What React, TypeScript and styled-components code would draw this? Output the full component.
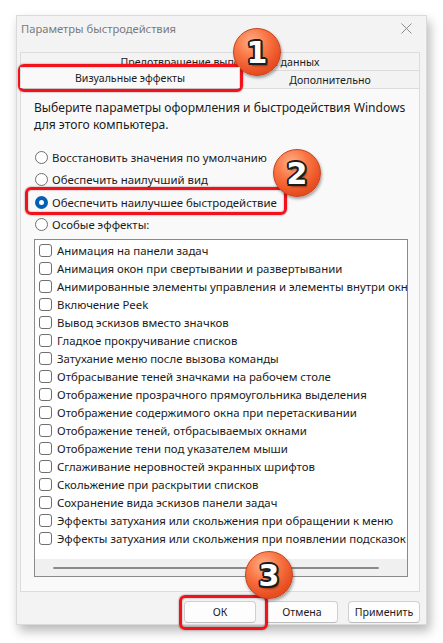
import React from "react";
import styled, { createGlobalStyle } from "styled-components";

const GlobalStyle = createGlobalStyle`
  html, body {
    margin: 0;
    padding: 0;
    background: #ffffff;
  }
  body {
    font-family: "Noto Sans", "Open Sans", sans-serif;
    color: #1b1b1b;
  }
`;

const effects = [
  "Анимация на панели задач",
  "Анимация окон при свертывании и развертывании",
  "Анимированные элементы управления и элементы внутри окна",
  "Включение Peek",
  "Вывод эскизов вместо значков",
  "Гладкое прокручивание списков",
  "Затухание меню после вызова команды",
  "Отбрасывание теней значками на рабочем столе",
  "Отображение прозрачного прямоугольника выделения",
  "Отображение содержимого окна при перетаскивании",
  "Отображение теней, отбрасываемых окнами",
  "Отображение тени под указателем мыши",
  "Сглаживание неровностей экранных шрифтов",
  "Скольжение при раскрытии списков",
  "Сохранение вида эскизов панели задач",
  "Эффекты затухания или скольжения при обращении к меню",
  "Эффекты затухания или скольжения при появлении подсказок",
];

const modes = [
  { label: "Восстановить значения по умолчанию", checked: false },
  { label: "Обеспечить наилучший вид", checked: false },
  { label: "Обеспечить наилучшее быстродействие", checked: true },
  { label: "Особые эффекты:", checked: false },
];

const CloseIcon = () => (
  <svg width="11" height="11" viewBox="0 0 11 11">
    <path d="M0.5 0.5 L10.5 10.5 M10.5 0.5 L0.5 10.5" stroke="#8a8a8a" strokeWidth="1" fill="none" />
  </svg>
);

export default function App() {
  return (
    <Page>
      <GlobalStyle />
      <Window>
        <TitleBar>
          <Title>Параметры быстродействия</Title>
          <CloseButton>
            <CloseIcon />
          </CloseButton>
        </TitleBar>

        <Body>
          <Tabs>
            <TabRow>
              <Tab $width="100%">Предотвращение выполнения данных</Tab>
            </TabRow>
            <TabRow>
              <Tab $width="220px" $active>
                Визуальные эффекты
              </Tab>
              <Tab $width="180px">Дополнительно</Tab>
            </TabRow>
          </Tabs>

          <Panel>
            <Description>
              Выберите параметры оформления и быстродействия Windows
              <br />
              для этого компьютера.
            </Description>

            <RadioGroup>
              {modes.map((m) => (
                <RadioRow key={m.label}>
                  <Radio $checked={m.checked} />
                  <span>{m.label}</span>
                </RadioRow>
              ))}
            </RadioGroup>

            <ListBox>
              <Items>
                {effects.map((e) => (
                  <Item key={e}>
                    <Checkbox />
                    <span>{e}</span>
                  </Item>
                ))}
              </Items>
              <HScroll>
                <Thumb />
              </HScroll>
            </ListBox>
          </Panel>

          <Footer>
            <Button>ОК</Button>
            <Button>Отмена</Button>
            <Button>Применить</Button>
          </Footer>
        </Body>
      </Window>

      {/* annotations over the screenshot */}
      <Highlight $x={18} $y={64} $w={225} $h={28} />
      <Highlight $x={25} $y={187} $w={262} $h={28} />
      <Highlight $x={179} $y={595} $w={89} $h={35} />
      <Badge $x={257} $y={52}>1</Badge>
      <Badge $x={297} $y={173}>2</Badge>
      <Badge $x={269} $y={575}>3</Badge>
    </Page>
  );
}

const Page = styled.div`
  position: relative;
  width: 443px;
  height: 643px;
  padding: 15px 0 0 16px;
  box-sizing: border-box;
  overflow: hidden;
`;

const Window = styled.div`
  width: 411px;
  height: 610px;
  box-sizing: border-box;
  background: #f3f3f3;
  border: 1px solid #dadada;
  box-shadow: 3px 6px 10px rgba(0, 0, 0, 0.28);
  display: flex;
  flex-direction: column;
`;

const TitleBar = styled.div`
  height: 24px;
  display: flex;
  align-items: center;
  justify-content: space-between;
  padding: 0 14px 0 4px;
`;

const Title = styled.div`
  font-size: 11.2px;
  color: #7a7a7a;
`;

const CloseButton = styled.div`
  display: flex;
  align-items: center;
  width: 11px;
  height: 11px;
`;

const Body = styled.div`
  display: flex;
  flex-direction: column;
  padding: 12px 6px 0 3px;
`;

const Tabs = styled.div`
  display: flex;
  flex-direction: column;
`;

const TabRow = styled.div`
  display: flex;
  height: 18px;
  align-items: flex-end;
`;

const Tab = styled.div<{ $width: string; $active?: boolean }>`
  width: ${({ $width }) => $width};
  height: ${({ $active }) => ($active ? "21px" : "18px")};
  box-sizing: border-box;
  border: 1px solid #dcdcdc;
  border-bottom: none;
  background: ${({ $active }) => ($active ? "#f9f9f9" : "#f3f3f3")};
  font-size: 10.6px;
  display: flex;
  align-items: center;
  justify-content: center;
  white-space: nowrap;
  overflow: hidden;
  position: relative;
  z-index: ${({ $active }) => ($active ? 1 : 0)};
`;

const Panel = styled.div`
  height: 504px;
  box-sizing: border-box;
  border: 1px solid #dcdcdc;
  background: #f9f9f9;
  padding: 10px 11px 14px 13px;
  display: flex;
  flex-direction: column;
`;

const Description = styled.div`
  font-size: 12.1px;
  line-height: 17px;
`;

const RadioGroup = styled.div`
  margin-top: 13px;
  display: flex;
  flex-direction: column;
`;

const RadioRow = styled.div`
  height: 22.5px;
  display: flex;
  align-items: center;
  gap: 4px;
  font-size: 11.4px;
  padding-left: 1px;
`;

const Radio = styled.div<{ $checked?: boolean }>`
  width: 13px;
  height: 13px;
  box-sizing: border-box;
  border-radius: 50%;
  border: ${({ $checked }) => ($checked ? "4px solid #005fb8" : "1px solid #6f6f6f")};
  background: #ffffff;
  flex-shrink: 0;
`;

const ListBox = styled.div`
  margin-top: 3px;
  height: 338px;
  box-sizing: border-box;
  border: 1px solid #8a8a8a;
  background: #ffffff;
  display: flex;
  flex-direction: column;
  overflow: hidden;
`;

const Items = styled.div`
  flex: 1;
  padding-top: 1px;
  display: flex;
  flex-direction: column;
`;

const Item = styled.div`
  height: 18px;
  display: flex;
  align-items: center;
  gap: 5px;
  padding-left: 4px;
  font-size: 11.4px;
  white-space: nowrap;
`;

const Checkbox = styled.div`
  width: 13px;
  height: 13px;
  box-sizing: border-box;
  border: 1px solid #6f6f6f;
  border-radius: 3px;
  background: #ffffff;
  flex-shrink: 0;
`;

const HScroll = styled.div`
  height: 17px;
  background: #f0f0f0;
  display: flex;
  align-items: center;
  padding: 0 28px 0 18px;
`;

const Thumb = styled.div`
  flex: 1;
  height: 2px;
  border-radius: 1px;
  background: #8a8a8a;
`;

const Footer = styled.div`
  display: flex;
  justify-content: flex-end;
  gap: 10px;
  margin-top: 9px;
`;

const Button = styled.div`
  width: 72px;
  height: 22px;
  box-sizing: border-box;
  border: 1px solid #d0d0d0;
  border-bottom-color: #bdbdbd;
  border-radius: 4px;
  background: #fdfdfd;
  font-size: 10.6px;
  display: flex;
  align-items: center;
  justify-content: center;
`;

const Highlight = styled.div<{ $x: number; $y: number; $w: number; $h: number }>`
  position: absolute;
  left: ${({ $x }) => $x}px;
  top: ${({ $y }) => $y}px;
  width: ${({ $w }) => $w}px;
  height: ${({ $h }) => $h}px;
  box-sizing: border-box;
  border: 3px solid #f2121b;
  border-radius: 6px;
  box-shadow: 0 0 2px rgba(90, 0, 0, 0.55), inset 0 0 2px rgba(90, 0, 0, 0.45);
  pointer-events: none;
`;

const Badge = styled.div<{ $x: number; $y: number }>`
  position: absolute;
  left: ${({ $x }) => $x - 24}px;
  top: ${({ $y }) => $y - 24}px;
  width: 48px;
  height: 48px;
  box-sizing: border-box;
  border-radius: 50%;
  border: 1px solid #c4431f;
  background: radial-gradient(circle at 38% 28%, #ffb08a 0%, #fa7846 35%, #e94f22 70%, #d23d14 100%);
  box-shadow: 1px 2px 3px rgba(0, 0, 0, 0.35);
  display: flex;
  align-items: center;
  justify-content: center;
  font-family: "DejaVu Sans", "Liberation Sans", sans-serif;
  font-weight: bold;
  font-size: 30px;
  color: #ffffff;
  text-shadow:
    -2px 0 0 #1d1d1d, 2px 0 0 #1d1d1d, 0 -2px 0 #1d1d1d, 0 2px 0 #1d1d1d,
    -1.5px -1.5px 0 #1d1d1d, 1.5px -1.5px 0 #1d1d1d, -1.5px 1.5px 0 #1d1d1d, 1.5px 1.5px 0 #1d1d1d,
    2px 3px 2px rgba(0, 0, 0, 0.4);
`;
